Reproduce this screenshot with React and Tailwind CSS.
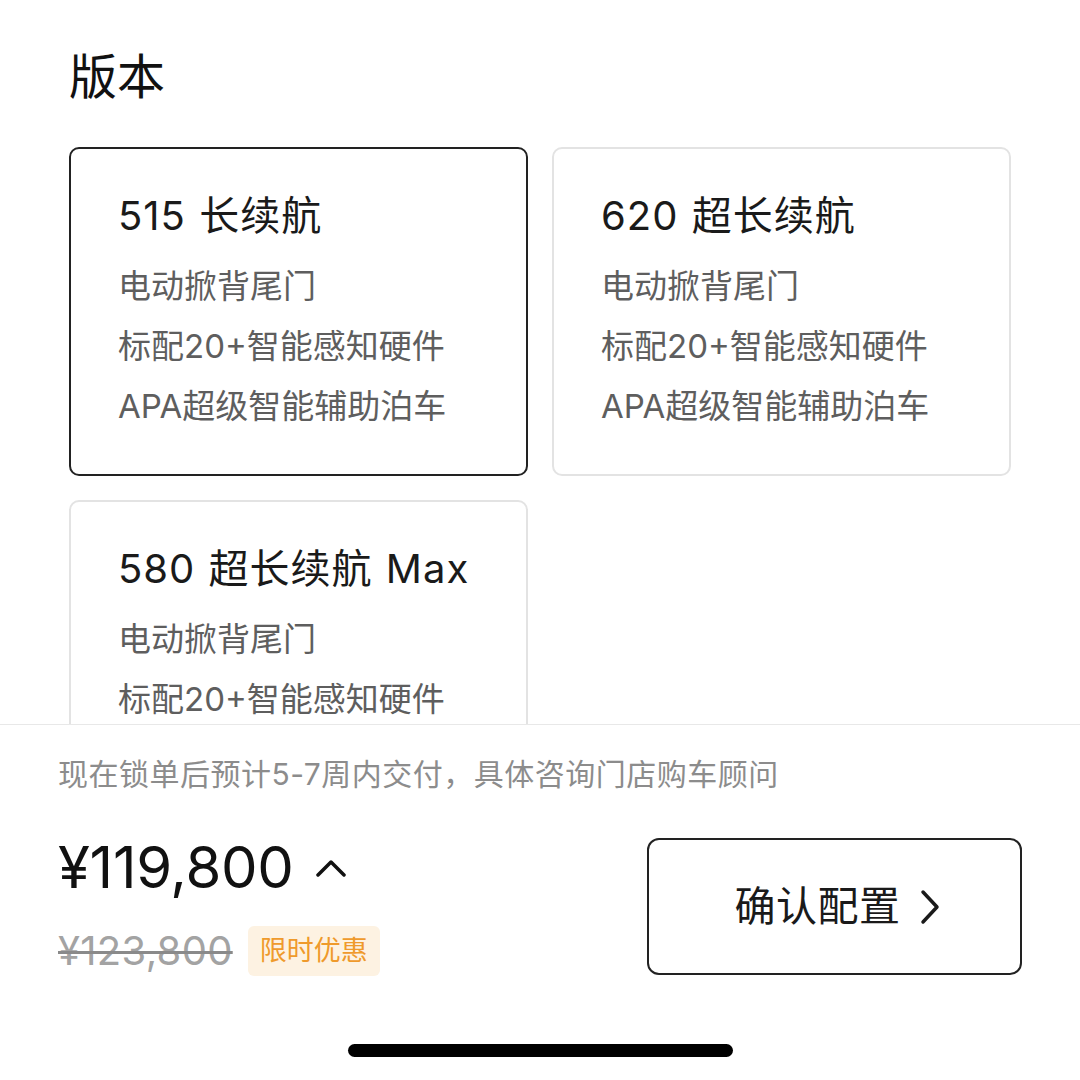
import React from "react";

const versions = [
  {
    id: "515",
    name: "515 长续航",
    features: ["电动掀背尾门", "标配20+智能感知硬件", "APA超级智能辅助泊车"],
  },
  {
    id: "620",
    name: "620 超长续航",
    features: ["电动掀背尾门", "标配20+智能感知硬件", "APA超级智能辅助泊车"],
  },
  {
    id: "580",
    name: "580 超长续航 Max",
    features: ["电动掀背尾门", "标配20+智能感知硬件", "APA超级智能辅助泊车"],
  },
];

const VersionCard = ({ version, selected }) => (
  <div
    className={`rounded-[10px] border-2 bg-white pl-[47px] pr-4 pt-[45px] pb-[38px] ${
      selected ? "border-[#222222]" : "border-[#e3e3e3]"
    }`}
  >
    <h3 className="text-[40px] leading-[44px] text-[#1a1a1a] mb-[18px] whitespace-nowrap tracking-[1px] [word-spacing:1px]">
      {version.name}
    </h3>
    {version.features.map((f) => (
      <p key={f} className="text-[33px] leading-[60px] text-[#5e5e5e] whitespace-nowrap">
        {f}
      </p>
    ))}
  </div>
);

export default function App() {
  return (
    <div className="relative w-[1080px] h-[1080px] overflow-hidden bg-white font-[Inter,'Noto_Sans_CJK_SC',sans-serif]">
      <div className="px-[69px] pt-[47px]">
        <h2 className="text-[48px] leading-[60px] text-[#111111] mb-[40px]">版本</h2>
        <div className="grid grid-cols-2 gap-6">
          {versions.map((v, i) => (
            <VersionCard key={v.id} version={v} selected={i === 0} />
          ))}
        </div>
      </div>

      {/* bottom sheet */}
      <div className="absolute left-0 right-0 bottom-0 h-[356px] bg-white border-t border-[#e8e8e8] px-[58px] pt-[29px]">
        <p className="text-[30px] leading-[40px] text-[#8c8c8c] whitespace-nowrap tracking-[0.5px]">
          现在锁单后预计5-7周内交付，具体咨询门店购车顾问
        </p>
        <div className="flex justify-between items-start">
          <div className="mt-[37px]">
            <div className="flex items-center h-[72px]">
              <span className="text-[58px] leading-[72px] text-[#111111] tracking-[-0.3px]">¥119,800</span>
              <svg width="30" height="20" viewBox="0 0 30 20" className="ml-[22px] mt-[2px]" fill="none">
                <path d="M2 17 L15 4 L28 17" stroke="#111" strokeWidth="3.5" strokeLinecap="round" strokeLinejoin="round" />
              </svg>
            </div>
            <div className="flex items-center mt-[23px]">
              <span className="text-[40px] leading-[50px] text-[#a3a3a3] line-through decoration-[#8a8a8a] decoration-[3px] tracking-[0.3px]">
                ¥123,800
              </span>
              <span className="ml-[15px] h-[50px] px-[12px] flex items-center rounded-[6px] bg-[#fdf2e2] text-[27px] text-[#ef9a2c]">
                限时优惠
              </span>
            </div>
          </div>
          <button className="mt-[44px] w-[375px] h-[137px] rounded-[12px] border-2 border-[#222222] flex items-center justify-center bg-white">
            <span className="text-[41px] text-[#1a1a1a] ml-[8px] tracking-[0.5px]">确认配置</span>
            <svg width="26" height="36" viewBox="0 0 26 36" className="ml-[16px]" fill="none">
              <path d="M6 3 L20 18 L6 33" stroke="#1a1a1a" strokeWidth="3.5" strokeLinecap="round" strokeLinejoin="round" />
            </svg>
          </button>
        </div>
        <div className="absolute left-[348px] bottom-[23px] w-[385px] h-[13px] rounded-full bg-black" />
      </div>
    </div>
  );
}
